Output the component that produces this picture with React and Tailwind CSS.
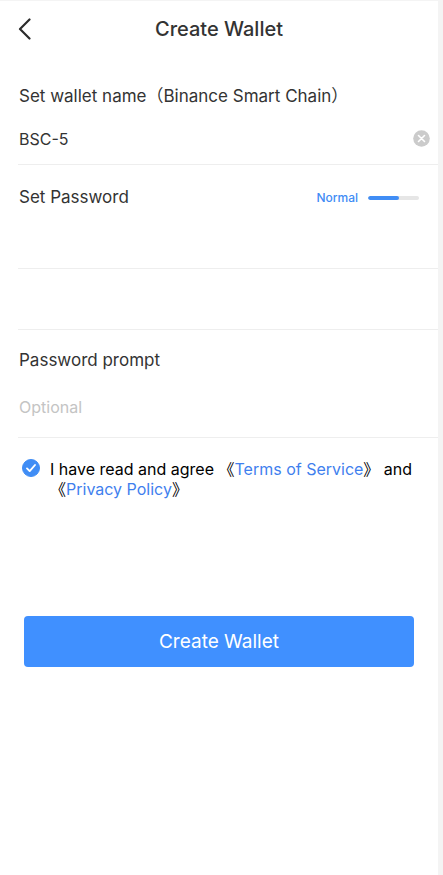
import { useState } from "react";

function Label({ htmlFor, children }) {
  return (
    <label htmlFor={htmlFor} className="flex h-8 items-center pl-px">
      {children}
    </label>
  );
}

export default function App() {
  const [name, setName] = useState("BSC-5");
  const [agreed, setAgreed] = useState(true);

  return (
    <main className="min-h-screen border-t border-r-[5px] border-t-[#f4f4f4] border-r-[#f4f4f4] bg-white font-['Inter','Noto_Sans_CJK_SC',sans-serif] text-[#333333]">
      <header className="grid h-14 grid-cols-[48px_1fr_48px] items-center">
        <button type="button" aria-label="Back" className="flex h-full items-center pl-[18px]">
          <svg width="14" height="22" viewBox="0 0 14 22" fill="none" stroke="#2b2b2b" strokeWidth="2.2" strokeLinecap="round" strokeLinejoin="round">
            <path d="M11.5 1.5 2 11l9.5 9.5" />
          </svg>
        </button>
        <h1 className="text-center text-xl font-medium">Create Wallet</h1>
      </header>

      <form className="text-[17px]" onSubmit={(e) => e.preventDefault()}>
        <section className="ml-[18px] border-b border-[#eeeeee] pt-6">
          <Label htmlFor="name">Set wallet name（Binance Smart Chain）</Label>
          <div className="flex h-[51px] items-center pr-2">
            <input
              id="name"
              value={name}
              onChange={(e) => setName(e.target.value)}
              className="h-full min-w-0 flex-1 pl-px text-base outline-none"
            />
            <button type="button" aria-label="Clear wallet name" onClick={() => setName("")}>
              <svg width="17" height="17" viewBox="0 0 17 17">
                <circle cx="8.5" cy="8.5" r="8.3" fill="#cbcbcb" />
                <path d="m5.5 5.5 6 6m0-6-6 6" stroke="#fff" strokeWidth="1.6" strokeLinecap="round" />
              </svg>
            </button>
          </div>
        </section>

        <section className="ml-[18px] pt-[17px]">
          <div className="flex items-center justify-between pr-[19px]">
            <Label htmlFor="password">Set Password</Label>
            <div className="flex items-center gap-2.5">
              <span className="text-xs font-medium text-[#3f8cf5]">Normal</span>
              <div role="meter" aria-label="Password strength" aria-valuenow={60} aria-valuemin={0} aria-valuemax={100} className="h-1 w-[51px] overflow-hidden rounded-full bg-[#e6e6e6]">
                <div className="h-full w-3/5 rounded-full bg-[#408df5]" />
              </div>
            </div>
          </div>
          <input id="password" type="password" className="block h-[55px] w-full border-b border-[#eeeeee] outline-none" />
          <input type="password" aria-label="Repeat password" className="block h-[61px] w-full border-b border-[#eeeeee] outline-none" />
        </section>

        <section className="ml-[18px] border-b border-[#eeeeee] pt-[15px]">
          <Label htmlFor="prompt">Password prompt</Label>
          <input id="prompt" placeholder="Optional" className="block h-[60px] w-full pl-px text-base outline-none placeholder:text-[#c4c4c4]" />
        </section>

        <div className="flex gap-2.5 pt-[21px] pr-4 pl-[22px] text-base leading-5 text-black">
          <span className="relative size-[18px] shrink-0">
            <input
              id="agree"
              type="checkbox"
              checked={agreed}
              onChange={(e) => setAgreed(e.target.checked)}
              className="peer block size-full appearance-none rounded-full border border-[#cbcbcb] checked:border-[#408df5] checked:bg-[#408df5]"
            />
            <svg className="pointer-events-none absolute inset-0 hidden peer-checked:block" viewBox="0 0 18 18" fill="none" stroke="#fff" strokeWidth="1.9" strokeLinecap="round" strokeLinejoin="round">
              <path d="m5 9.4 2.7 2.7L13 6" />
            </svg>
          </span>
          <label htmlFor="agree">
            I have read and agree 《<a href="#terms" className="text-[#3f7fee]">Terms of Service</a>》 and
            <br />
            《<a href="#privacy" className="text-[#3f7fee]">Privacy Policy</a>》
          </label>
        </div>

        <div className="px-6 pt-[117px]">
          <button type="submit" className="flex h-[51px] w-full items-center justify-center rounded bg-[#4090ff] pt-0.5 text-[19px] text-white">
            Create Wallet
          </button>
        </div>
      </form>
    </main>
  );
}
